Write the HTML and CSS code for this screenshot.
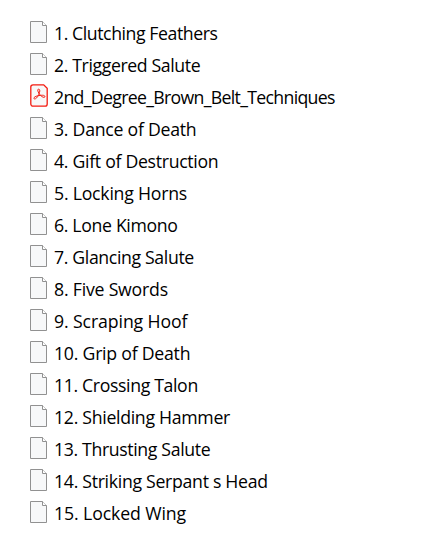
FILE: index.html
```html
<!DOCTYPE html>
<html lang="en">
<head>
<meta charset="utf-8">
<title>Techniques</title>
<link rel="stylesheet" href="styles.css">
</head>
<body>
<svg class="defs" aria-hidden="true">
<symbol id="file" viewBox="0 0 18 23"><path d="M.5 1.500h12l4 4v17H.5z" fill="#f7f8f9" stroke="#919191"/><path d="M12.500 1.500v4h4" fill="#fff" stroke="#919191"/></symbol>
<symbol id="pdf" viewBox="0 0 18 23"><path d="M3 .8h10.700l3.500 3.500V20a2.200 2.200 0 0 1-2.200 2.200H3A2.200 2.200 0 0 1 .8 20V3A2.200 2.200 0 0 1 3 .8z" fill="#f8f8f8" stroke="#f31b10" stroke-width="1.300"/><path d="M8.500 5.200c1.900 0 1.500 2.600.2 5.400-1.200 2.600-2.900 4.700-4.300 4.300-1.800-.7.600-2.500 3.300-3.100 3.200-.7 7.300-1 7.200.8-.2 1.900-3.800 0-5.300-2.300C8.100 8.400 6.900 5.200 8.500 5.200z" fill="none" stroke="#f31b10"/></symbol>
</svg>
<ul class="files">
<li><svg><use href="#file"/></svg><span>1. Clutching Feathers</span></li>
<li><svg><use href="#file"/></svg><span>2. Triggered Salute</span></li>
<li><svg><use href="#pdf"/></svg><span>2nd_Degree_Brown_Belt_Techniques</span></li>
<li><svg><use href="#file"/></svg><span>3. Dance of Death</span></li>
<li><svg><use href="#file"/></svg><span>4. Gift of Destruction</span></li>
<li><svg><use href="#file"/></svg><span>5. Locking Horns</span></li>
<li><svg><use href="#file"/></svg><span>6. Lone Kimono</span></li>
<li><svg><use href="#file"/></svg><span>7. Glancing Salute</span></li>
<li><svg><use href="#file"/></svg><span>8. Five Swords</span></li>
<li><svg><use href="#file"/></svg><span>9. Scraping Hoof</span></li>
<li><svg><use href="#file"/></svg><span>10. Grip of Death</span></li>
<li><svg><use href="#file"/></svg><span>11. Crossing Talon</span></li>
<li><svg><use href="#file"/></svg><span>12. Shielding Hammer</span></li>
<li><svg><use href="#file"/></svg><span>13. Thrusting Salute</span></li>
<li><svg><use href="#file"/></svg><span>14. Striking Serpant s Head</span></li>
<li><svg><use href="#file"/></svg><span>15. Locked Wing</span></li>
</ul>
</body>
</html>
```
FILE: styles.css
```css
body { margin: 0; background: #fff; color: #000; font: 17.7px/32px "Open Sans", "Noto Sans", sans-serif; }
.defs { display: none; }
.files { list-style: none; margin: 0; padding: 17px 0 0 30px; }
.files li { display: flex; height: 32px; gap: 6px; white-space: nowrap; letter-spacing: -.3px; }
.files svg { width: 18px; height: 23px; flex: none; margin-top: 3px; }

.files li:nth-child(1) { letter-spacing: -.43px; }
.files li:nth-child(2) { letter-spacing: -.39px; }
.files li:nth-child(3) { letter-spacing: -.68px; }
.files li:nth-child(4) { letter-spacing: -.26px; }
.files li:nth-child(6) { letter-spacing: -.23px; }
.files li:nth-child(7) { letter-spacing: -.34px; }
.files li:nth-child(8) { letter-spacing: -.36px; }
.files li:nth-child(9) { letter-spacing: -.21px; }
.files li:nth-child(10) { letter-spacing: -.11px; }
.files li:nth-child(11) { letter-spacing: -.24px; }
.files li:nth-child(12) { letter-spacing: -.36px; }
.files li:nth-child(14) { letter-spacing: -.36px; }
.files li:nth-child(16) { letter-spacing: -.11px; }
```
